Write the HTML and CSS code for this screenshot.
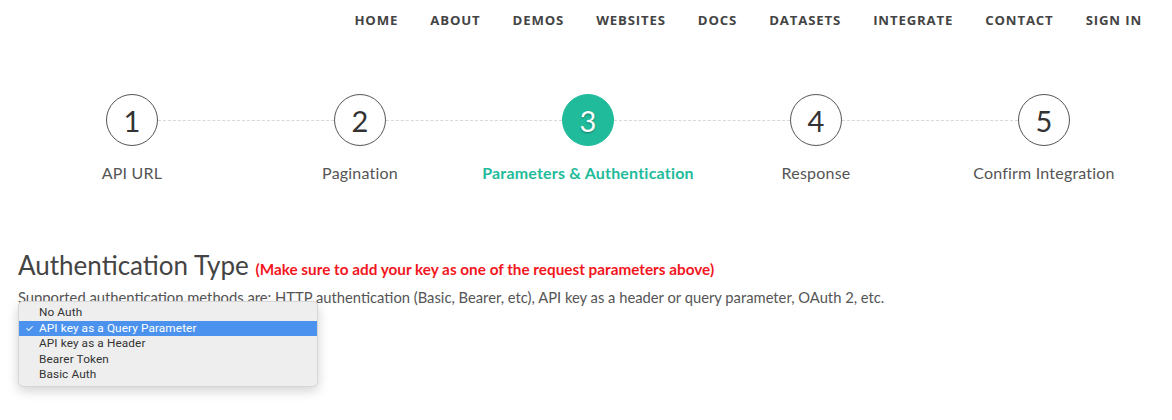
FILE: index.html
```html
<!DOCTYPE html>
<html>
<head>
<meta charset="utf-8">
<link rel="stylesheet" href="styles.css">
</head>
<body>
<header class="topbar">
  <nav class="nav">
    <a>HOME</a><a>ABOUT</a><a>DEMOS</a><a>WEBSITES</a><a>DOCS</a><a>DATASETS</a><a>INTEGRATE</a><a>CONTACT</a><a>SIGN IN</a>
  </nav>
</header>
<main class="page">
  <ol class="steps">
    <li class="step"><span class="circle">1</span><span class="label">API URL</span></li>
    <li class="step"><span class="circle">2</span><span class="label">Pagination</span></li>
    <li class="step active"><span class="circle">3</span><span class="label">Parameters &amp; Authentication</span></li>
    <li class="step"><span class="circle">4</span><span class="label">Response</span></li>
    <li class="step last"><span class="circle">5</span><span class="label">Confirm Integration</span></li>
  </ol>
  <section class="auth">
    <h2 class="title">Authentication Type <span class="warn">(Make sure to add your key as one of the request parameters above)</span></h2>
    <div class="desc-wrap">
      <p class="desc">Supported authentication methods are: HTTP authentication (Basic, Bearer, etc), API key as a header or query parameter, OAuth 2, etc.</p>
      <ul class="menu">
        <li class="opt">No Auth</li>
        <li class="opt sel"><span class="check">✓</span>API key as a Query Parameter</li>
        <li class="opt">API key as a Header</li>
        <li class="opt">Bearer Token</li>
        <li class="opt">Basic Auth</li>
      </ul>
    </div>
  </section>
</main>
</body>
</html>
```
FILE: styles.css
```css
html, body { margin: 0; padding: 0; background: #fff; }
body { width: 1172px; height: 420px; overflow: hidden; font-family: "Lato", sans-serif; }

.topbar { height: 40px; display: flex; justify-content: flex-end; padding-right: 30px; }
.nav { display: flex; gap: 32px; align-items: center; height: 40px; }
.nav a { font-family: "Open Sans", "DejaVu Sans", sans-serif; font-weight: 700; font-size: 13.2px; letter-spacing: 0.85px; color: #444; }

.page { width: 1140px; margin-left: 18px; }

.steps { list-style: none; margin: 54px 0 0 0; padding: 0; display: grid; grid-template-columns: repeat(5, 228px); }
.step { position: relative; display: flex; flex-direction: column; align-items: center; }
.step::after { content: ""; position: absolute; top: 26px; left: 140px; width: 176px; border-top: 1px dashed #d8d8d8; }
.step.last::after { display: none; }
.circle { width: 50px; height: 50px; border: 1px solid #555; border-radius: 50%; display: flex; align-items: center; justify-content: center; font-family: "Lato", sans-serif; font-size: 29px; color: #333; box-sizing: content-box; }
.label { margin-top: 17px; font-family: "Lato", sans-serif; font-weight: 400; font-size: 16px; color: #555; letter-spacing: 0.2px; }
.active .circle { background: #1fbb9b; border-color: #1fbb9b; color: #fff; text-shadow: 0 1px 2px rgba(0,0,0,0.35); }
.active .label { color: #1fbb9b; font-weight: 700; }

.auth { margin-top: 67px; }
.title { margin: 0; font-family: "Lato", sans-serif; font-weight: 400; font-size: 26px; color: #444; line-height: 32px; }
.warn { font-size: 15.3px; font-weight: 700; color: #f2161e; }
.desc-wrap { position: relative; margin-top: 1px; }
.desc { margin: 0; font-family: "Lato", sans-serif; font-size: 14.75px; color: #555; line-height: 22px; }
.menu { position: absolute; left: 0; top: 15px; width: 300px; margin: 0; padding: 3px 0 3px; list-style: none; background: #eeeeee; border: 1px solid #d6d6d6; border-radius: 5px; box-shadow: 0 4px 12px rgba(0,0,0,0.18); box-sizing: border-box; }
.opt { position: relative; height: 15.5px; line-height: 15.5px; padding-left: 20px; font-family: "Roboto", "Inter", sans-serif; font-size: 11.8px; color: #333; letter-spacing: 0.1px; }
.opt.sel { background: #4a92ee; color: #fff; }
.check { position: absolute; left: 6px; font-size: 10px; }
```
